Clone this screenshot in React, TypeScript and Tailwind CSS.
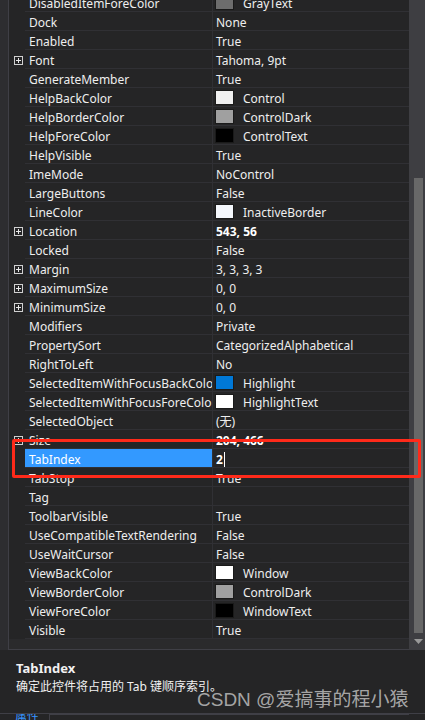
import React from 'react';

type Prop = {
  name: string;
  value: string;
  swatch?: string;
  expandable?: boolean;
  bold?: boolean;
  editing?: boolean;
};

const props: Prop[] = [
  { name: 'DisabledItemForeColor', value: 'GrayText', swatch: '#6d6d6d' },
  { name: 'Dock', value: 'None' },
  { name: 'Enabled', value: 'True' },
  { name: 'Font', value: 'Tahoma, 9pt', expandable: true },
  { name: 'GenerateMember', value: 'True' },
  { name: 'HelpBackColor', value: 'Control', swatch: '#f0f0f0' },
  { name: 'HelpBorderColor', value: 'ControlDark', swatch: '#a0a0a0' },
  { name: 'HelpForeColor', value: 'ControlText', swatch: '#000000' },
  { name: 'HelpVisible', value: 'True' },
  { name: 'ImeMode', value: 'NoControl' },
  { name: 'LargeButtons', value: 'False' },
  { name: 'LineColor', value: 'InactiveBorder', swatch: '#f4f7fc' },
  { name: 'Location', value: '543, 56', expandable: true, bold: true },
  { name: 'Locked', value: 'False' },
  { name: 'Margin', value: '3, 3, 3, 3', expandable: true },
  { name: 'MaximumSize', value: '0, 0', expandable: true },
  { name: 'MinimumSize', value: '0, 0', expandable: true },
  { name: 'Modifiers', value: 'Private' },
  { name: 'PropertySort', value: 'CategorizedAlphabetical' },
  { name: 'RightToLeft', value: 'No' },
  { name: 'SelectedItemWithFocusBackColor', value: 'Highlight', swatch: '#0078d7' },
  { name: 'SelectedItemWithFocusForeColor', value: 'HighlightText', swatch: '#ffffff' },
  { name: 'SelectedObject', value: '(无)' },
  { name: 'Size', value: '204, 466', expandable: true, bold: true },
  { name: 'TabIndex', value: '2', editing: true },
  { name: 'TabStop', value: 'True' },
  { name: 'Tag', value: '' },
  { name: 'ToolbarVisible', value: 'True' },
  { name: 'UseCompatibleTextRendering', value: 'False' },
  { name: 'UseWaitCursor', value: 'False' },
  { name: 'ViewBackColor', value: 'Window', swatch: '#ffffff' },
  { name: 'ViewBorderColor', value: 'ControlDark', swatch: '#a0a0a0' },
  { name: 'ViewForeColor', value: 'WindowText', swatch: '#000000' },
  { name: 'Visible', value: 'True' },
];

function PlusBox() {
  return (
    <svg width="9" height="9" viewBox="0 0 9 9" className="block">
      <rect x="0.5" y="0.5" width="8" height="8" fill="none" stroke="#d0d0d0" />
      <path d="M2 4.5h5M4.5 2v5" stroke="#e8e8e8" />
    </svg>
  );
}

function Row({ p }: { p: Prop }) {
  return (
    <div className="flex h-[19px] shrink-0">
      <div className="w-[16px] shrink-0 flex items-center justify-end pr-[2px] pt-[1px]">
        {p.expandable && <PlusBox />}
      </div>
      <div
        className={`w-[187px] shrink-0 border-b border-[#303034] pl-[4px] overflow-hidden whitespace-nowrap leading-[21px] ${
          p.editing ? 'bg-[#3399ff] text-white' : 'text-[#eeeeee]'
        }`}
      >
        {p.name}
      </div>
      <div className="w-px shrink-0 bg-[#303034]" />
      <div className="flex-1 border-b border-[#303034] pl-[2px] flex items-center whitespace-nowrap overflow-hidden text-[#eeeeee]">
        {p.swatch && (
          <span
            className="w-[19px] h-[15px] border border-[#1a1a1a] shrink-0 mr-[8px]"
            style={{ backgroundColor: p.swatch }}
          />
        )}
        <span className={`relative top-[2px] pl-[1px] ${p.bold || p.editing ? 'font-bold text-white' : ''}`}>
          {p.value}
        </span>
        {p.editing && <span className="w-px h-[15px] bg-white ml-[1px] relative top-[1px]" />}
      </div>
    </div>
  );
}

export default function App() {
  return (
    <div
      className="relative w-[425px] h-[720px] bg-[#252526] overflow-hidden flex flex-col text-[12px]"
      style={{ fontFamily: '"Noto Sans", "Noto Sans CJK SC", sans-serif' }}
    >
      <div className="flex h-[650px] shrink-0">
        {/* docked panel edge */}
        <div className="w-[9px] shrink-0 bg-[#2d2d30] border-r border-[#3f3f46]" />

        {/* property rows */}
        <div className="flex-1 flex flex-col overflow-hidden">
          <div className="flex flex-col -mt-[7px]">
            {props.map((p) => (
              <Row key={p.name} p={p} />
            ))}
          </div>
          <div className="flex-1 bg-[#2a2a2c] border-b border-[#3f3f46]" />
        </div>

        {/* scrollbar */}
        <div className="w-[16px] shrink-0 bg-[#3e3e42] flex flex-col">
          <div className="h-[178px] shrink-0" />
          <div className="h-[455px] w-[9px] ml-[5px] bg-[#686868]" />
          <div className="flex justify-center pt-[6px] pl-[2px]">
            <svg width="9" height="5" viewBox="0 0 9 5">
              <path d="M0 0h9L4.5 5z" fill="#999999" />
            </svg>
          </div>
        </div>
      </div>

      {/* description pane */}
      <div className="h-[63px] shrink-0 pl-[16px] pt-[8px] text-[#f1f1f1]">
        <div className="font-bold text-[13px] leading-[20px]">TabIndex</div>
        <div className="leading-[18px]">确定此控件将占用的 Tab 键顺序索引。</div>
      </div>

      {/* command strip */}
      <div className="flex-1 flex items-end gap-[10px] pl-[15px] border-t border-[#3f3f46]">
        <span className="text-[#3794ff] text-[12px] leading-[6px] h-[6px] overflow-hidden">属性</span>
        <div className="flex-1 h-[6px] border-t border-l border-[#3f3f46] mr-[16px]" />
      </div>

      {/* highlight frame around the TabIndex row */}
      <div className="absolute left-[12px] top-[439px] w-[409px] h-[39px] border-[3px] border-[#ff2a1a] rounded-[2px] pointer-events-none" />

      <div
        className="absolute left-[197px] top-[688px] text-[19px] leading-[24px] text-[#c8c8c8]/80 whitespace-nowrap pointer-events-none"
        style={{ fontFamily: '"Liberation Sans", "Noto Sans CJK SC", sans-serif' }}
      >
        CSDN @爱搞事的程小猿
      </div>
    </div>
  );
}
